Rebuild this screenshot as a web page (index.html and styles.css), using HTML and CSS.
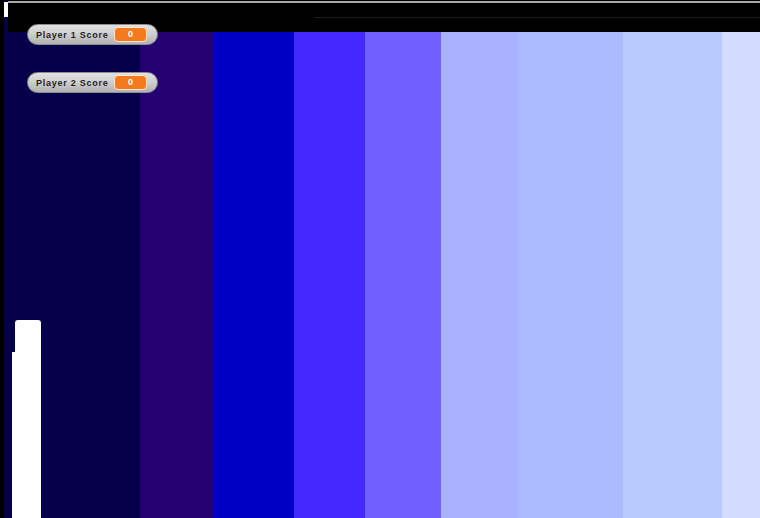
FILE: index.html
```html
<!DOCTYPE html>
<html lang="en">
<head>
    <meta charset="UTF-8">
    <meta name="viewport" content="width=device-width, initial-scale=1.0">
    <title>Pong</title>
    <link rel="stylesheet" href="styles.css">
</head>
<body>
    <div class="stage">
        <div class="bands">
            <div class="band band1"></div>
            <div class="band band2"></div>
            <div class="band band3"></div>
            <div class="band band4"></div>
            <div class="band band5"></div>
            <div class="band band6"></div>
            <div class="band band7"></div>
            <div class="band band8"></div>
            <div class="band band9"></div>
        </div>

        <div class="topbar">
            <div class="topbar-line"></div>
            <div class="topbar-streak"></div>
        </div>
        <div class="corner"></div>

        <div class="monitor monitor1">
            <span class="monitor-label">Player 1 Score</span>
            <span class="monitor-value">0</span>
        </div>
        <div class="monitor monitor2">
            <span class="monitor-label">Player 2 Score</span>
            <span class="monitor-value">0</span>
        </div>

        <div class="paddle-top"></div>
        <div class="paddle"></div>
    </div>
</body>
</html>
```

FILE: styles.css
```css
html, body {
    margin: 0;
    padding: 0;
    background-color: #000;
}
.stage {
    position: relative;
    width: 760px;
    height: 518px;
    overflow: hidden;
    padding-left: 4px;
    box-sizing: border-box;
    font-family: "Liberation Sans", Arial, sans-serif;
}
.bands {
    display: flex;
    height: 100%;
}
.band1 { width: 136px; background: #06004a; }
.band2 { width: 73px; background: #250070; }
.band3 { width: 81px; background: #0000c4; }
.band4 { width: 71px; background: #4428ff; }
.band5 { width: 76px; background: #7060ff; }
.band6 { width: 77px; background: #a8b2ff; }
.band7 { width: 105px; background: #abbaff; }
.band8 { width: 99px; background: #b9caff; }
.band9 { flex: 1; background: #d3dcff; }

/* black strip along the top of the stage */
.topbar {
    position: absolute;
    top: 0;
    left: 8px;
    right: 0;
    height: 32px;
    background: #000;
}
.topbar-line {
    height: 2px;
    margin-top: 1px;
    background: #a8a8a8;
}
.topbar-streak {
    height: 1px;
    margin: 14px 0 0 306px;
    background: #1c1c22;
}
.corner {
    position: absolute;
    top: 2px;
    left: 4px;
    width: 4px;
    height: 15px;
    background: #fff;
}

.monitor {
    position: absolute;
    left: 27px;
    width: 131px;
    height: 21px;
    box-sizing: border-box;
    padding: 0 10px 0 8px;
    display: flex;
    align-items: center;
    justify-content: space-between;
    border-radius: 11px;
    border: 1px solid #8e8e8e;
    background: linear-gradient(to bottom, #e2e2e2, #cdcdcd 50%, #b2b2b2);
}
.monitor1 { top: 24px; }
.monitor2 { top: 72px; }
.monitor-label {
    font-size: 9px;
    font-weight: bold;
    letter-spacing: 0.75px;
    color: #1e1e1e;
    white-space: nowrap;
}
.monitor-value {
    width: 33px;
    height: 15px;
    box-sizing: border-box;
    border: 1px solid #fbe6d0;
    border-radius: 4px;
    background: #f47a1c;
    color: #fff;
    font-size: 9px;
    font-weight: bold;
    line-height: 13px;
    text-align: center;
}

/* white paddle sprite */
.paddle-top {
    position: absolute;
    left: 15px;
    top: 320px;
    width: 26px;
    height: 32px;
    border-radius: 3px 3px 0 0;
    background: #fff;
}
.paddle {
    position: absolute;
    left: 12px;
    top: 352px;
    width: 29px;
    height: 166px;
    background: #fff;
}
```
